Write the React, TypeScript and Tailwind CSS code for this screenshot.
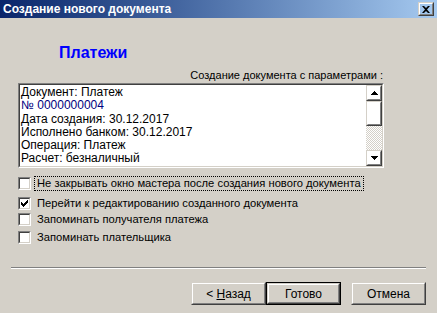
import React from 'react';

const FONT = "font-['Liberation_Sans',Arial,sans-serif]";

// classic 3D bevel wrappers
const Raised: React.FC<{ className?: string; children?: React.ReactNode }> = ({ className = '', children }) => (
  <div className={`border border-t-[#d4d0c8] border-l-[#d4d0c8] border-b-[#404040] border-r-[#404040] ${className}`}>
    <div className="w-full h-full border border-t-white border-l-white border-b-[#808080] border-r-[#808080] flex items-center justify-center">
      {children}
    </div>
  </div>
);

const Arrow: React.FC<{ up?: boolean }> = ({ up }) => (
  <svg width="7" height="4" viewBox="0 0 7 4" className={up ? '' : 'rotate-180'}>
    <path d="M3 0h1v1h1v1h1v1h1v1H0V3h1V2h1V1h1z" fill="#000" />
  </svg>
);

const Checkbox: React.FC<{ checked?: boolean }> = ({ checked }) => (
  <div className="w-[13px] h-[13px] shrink-0 border border-t-[#808080] border-l-[#808080] border-b-white border-r-white">
    <div className="w-full h-full bg-white border border-t-[#404040] border-l-[#404040] border-b-[#d4d0c8] border-r-[#d4d0c8] flex items-center justify-center">
      {checked && (
        <svg width="7" height="7" viewBox="0 0 7 7">
          <path d="M0 2h1v1h1v1h1V3h1V2h1V1h1V0h1v3H6v1H5v1H4v1H3v1H2V6H1V5H0z" fill="#000" />
        </svg>
      )}
    </div>
  </div>
);

const Button: React.FC<{ children: React.ReactNode; isDefault?: boolean }> = ({ children, isDefault }) =>
  isDefault ? (
    <div className="w-[75px] h-[23px] border border-black">
      <Raised className="w-full h-full">
        <span className="text-[12px] text-black">{children}</span>
      </Raised>
    </div>
  ) : (
    <Raised className="w-[75px] h-[23px]">
      <span className="text-[12px] text-black">{children}</span>
    </Raised>
  );

const LINES: { text: string; color?: string }[] = [
  { text: 'Документ: Платеж' },
  { text: '№ 0000000004', color: 'text-[#000080]' },
  { text: 'Дата создания: 30.12.2017' },
  { text: 'Исполнено банком: 30.12.2017' },
  { text: 'Операция: Платеж' },
  { text: 'Расчет: безналичный' },
];

const OPTIONS = [
  { label: 'Не закрывать окно мастера после создания нового документа', checked: false, focus: true, mt: 'mt-[8px]' },
  { label: 'Перейти к редактированию созданного документа', checked: true, mt: 'mt-[6px]' },
  { label: 'Запоминать получателя платежа', checked: false, mt: 'mt-[2px]' },
  { label: 'Запоминать плательщика', checked: false, mt: 'mt-[4px]' },
];

export default function App() {
  return (
    <div className={`w-[437px] h-[313px] bg-[#d4d0c8] flex flex-col overflow-hidden ${FONT}`}>
      {/* Title bar */}
      <div className="h-[18px] shrink-0 flex items-center justify-between pl-[3px] pr-[3px] bg-gradient-to-r from-[#0a246a] to-[#a6caf0]">
        <span className="text-white font-bold text-[12px] leading-none">Создание нового документа</span>
        <Raised className="w-[16px] h-[14px]">
          <svg width="8" height="7" viewBox="0 0 8 7">
            <path d="M0 0h2l2 2 2-2h2L5 3.5 8 7H6L4 5 2 7H0l3-3.5z" fill="#000" />
          </svg>
        </Raised>
      </div>

      {/* Header */}
      <div className="pl-[59px] mt-[26px] text-[16px] font-bold text-[#0000ff] leading-[18px]">Платежи</div>
      <div className="mt-[6px] pr-[54px] text-right text-[11px] leading-[14px] text-black">Создание документа с параметрами :</div>

      {/* List box */}
      <div className="ml-[18px] mt-[1px] w-[366px] h-[85px] border border-t-[#808080] border-l-[#808080] border-b-white border-r-white">
        <div className="w-full h-full bg-white border border-t-[#404040] border-l-[#404040] border-b-[#d4d0c8] border-r-[#d4d0c8] flex">
          <div className="flex-1 pl-[1px] pt-[1px] text-[12px] leading-[13.3px] text-black overflow-hidden">
            {LINES.map((l) => (
              <div key={l.text} className={l.color ?? ''}>{l.text}</div>
            ))}
          </div>
          <div className="w-[16px] flex flex-col">
            <Raised className="w-[16px] h-[16px]"><Arrow up /></Raised>
            <Raised className="w-[16px] h-[25px]" />
            <div className="flex-1 bg-[repeating-conic-gradient(#ffffff_0%_25%,#d4d0c8_0%_50%)] bg-[length:2px_2px]" />
            <Raised className="w-[16px] h-[16px]"><Arrow /></Raised>
          </div>
        </div>
      </div>

      {/* Options */}
      <div className="ml-[18px] flex flex-col">
        {OPTIONS.map((o) => (
          <div key={o.label} className={`flex items-center h-[14px] ${o.mt}`}>
            <Checkbox checked={o.checked} />
            <span
              className={`ml-[4px] text-[11.2px] leading-[13px] text-black px-[2px] ${
                o.focus ? 'outline outline-1 outline-dotted outline-black' : ''
              }`}
            >
              {o.label}
            </span>
          </div>
        ))}
      </div>

      {/* Separator */}
      <div className="mt-[23px] mx-[11px] border-t border-t-[#808080] border-b border-b-white" />

      {/* Buttons */}
      <div className="mt-[13px] flex justify-end pr-[11px]">
        <Button>
          &lt; <span className="underline">Н</span>азад
        </Button>
        <Button isDefault>Готово</Button>
        <div className="w-[10px]" />
        <Button>Отмена</Button>
      </div>
    </div>
  );
}
